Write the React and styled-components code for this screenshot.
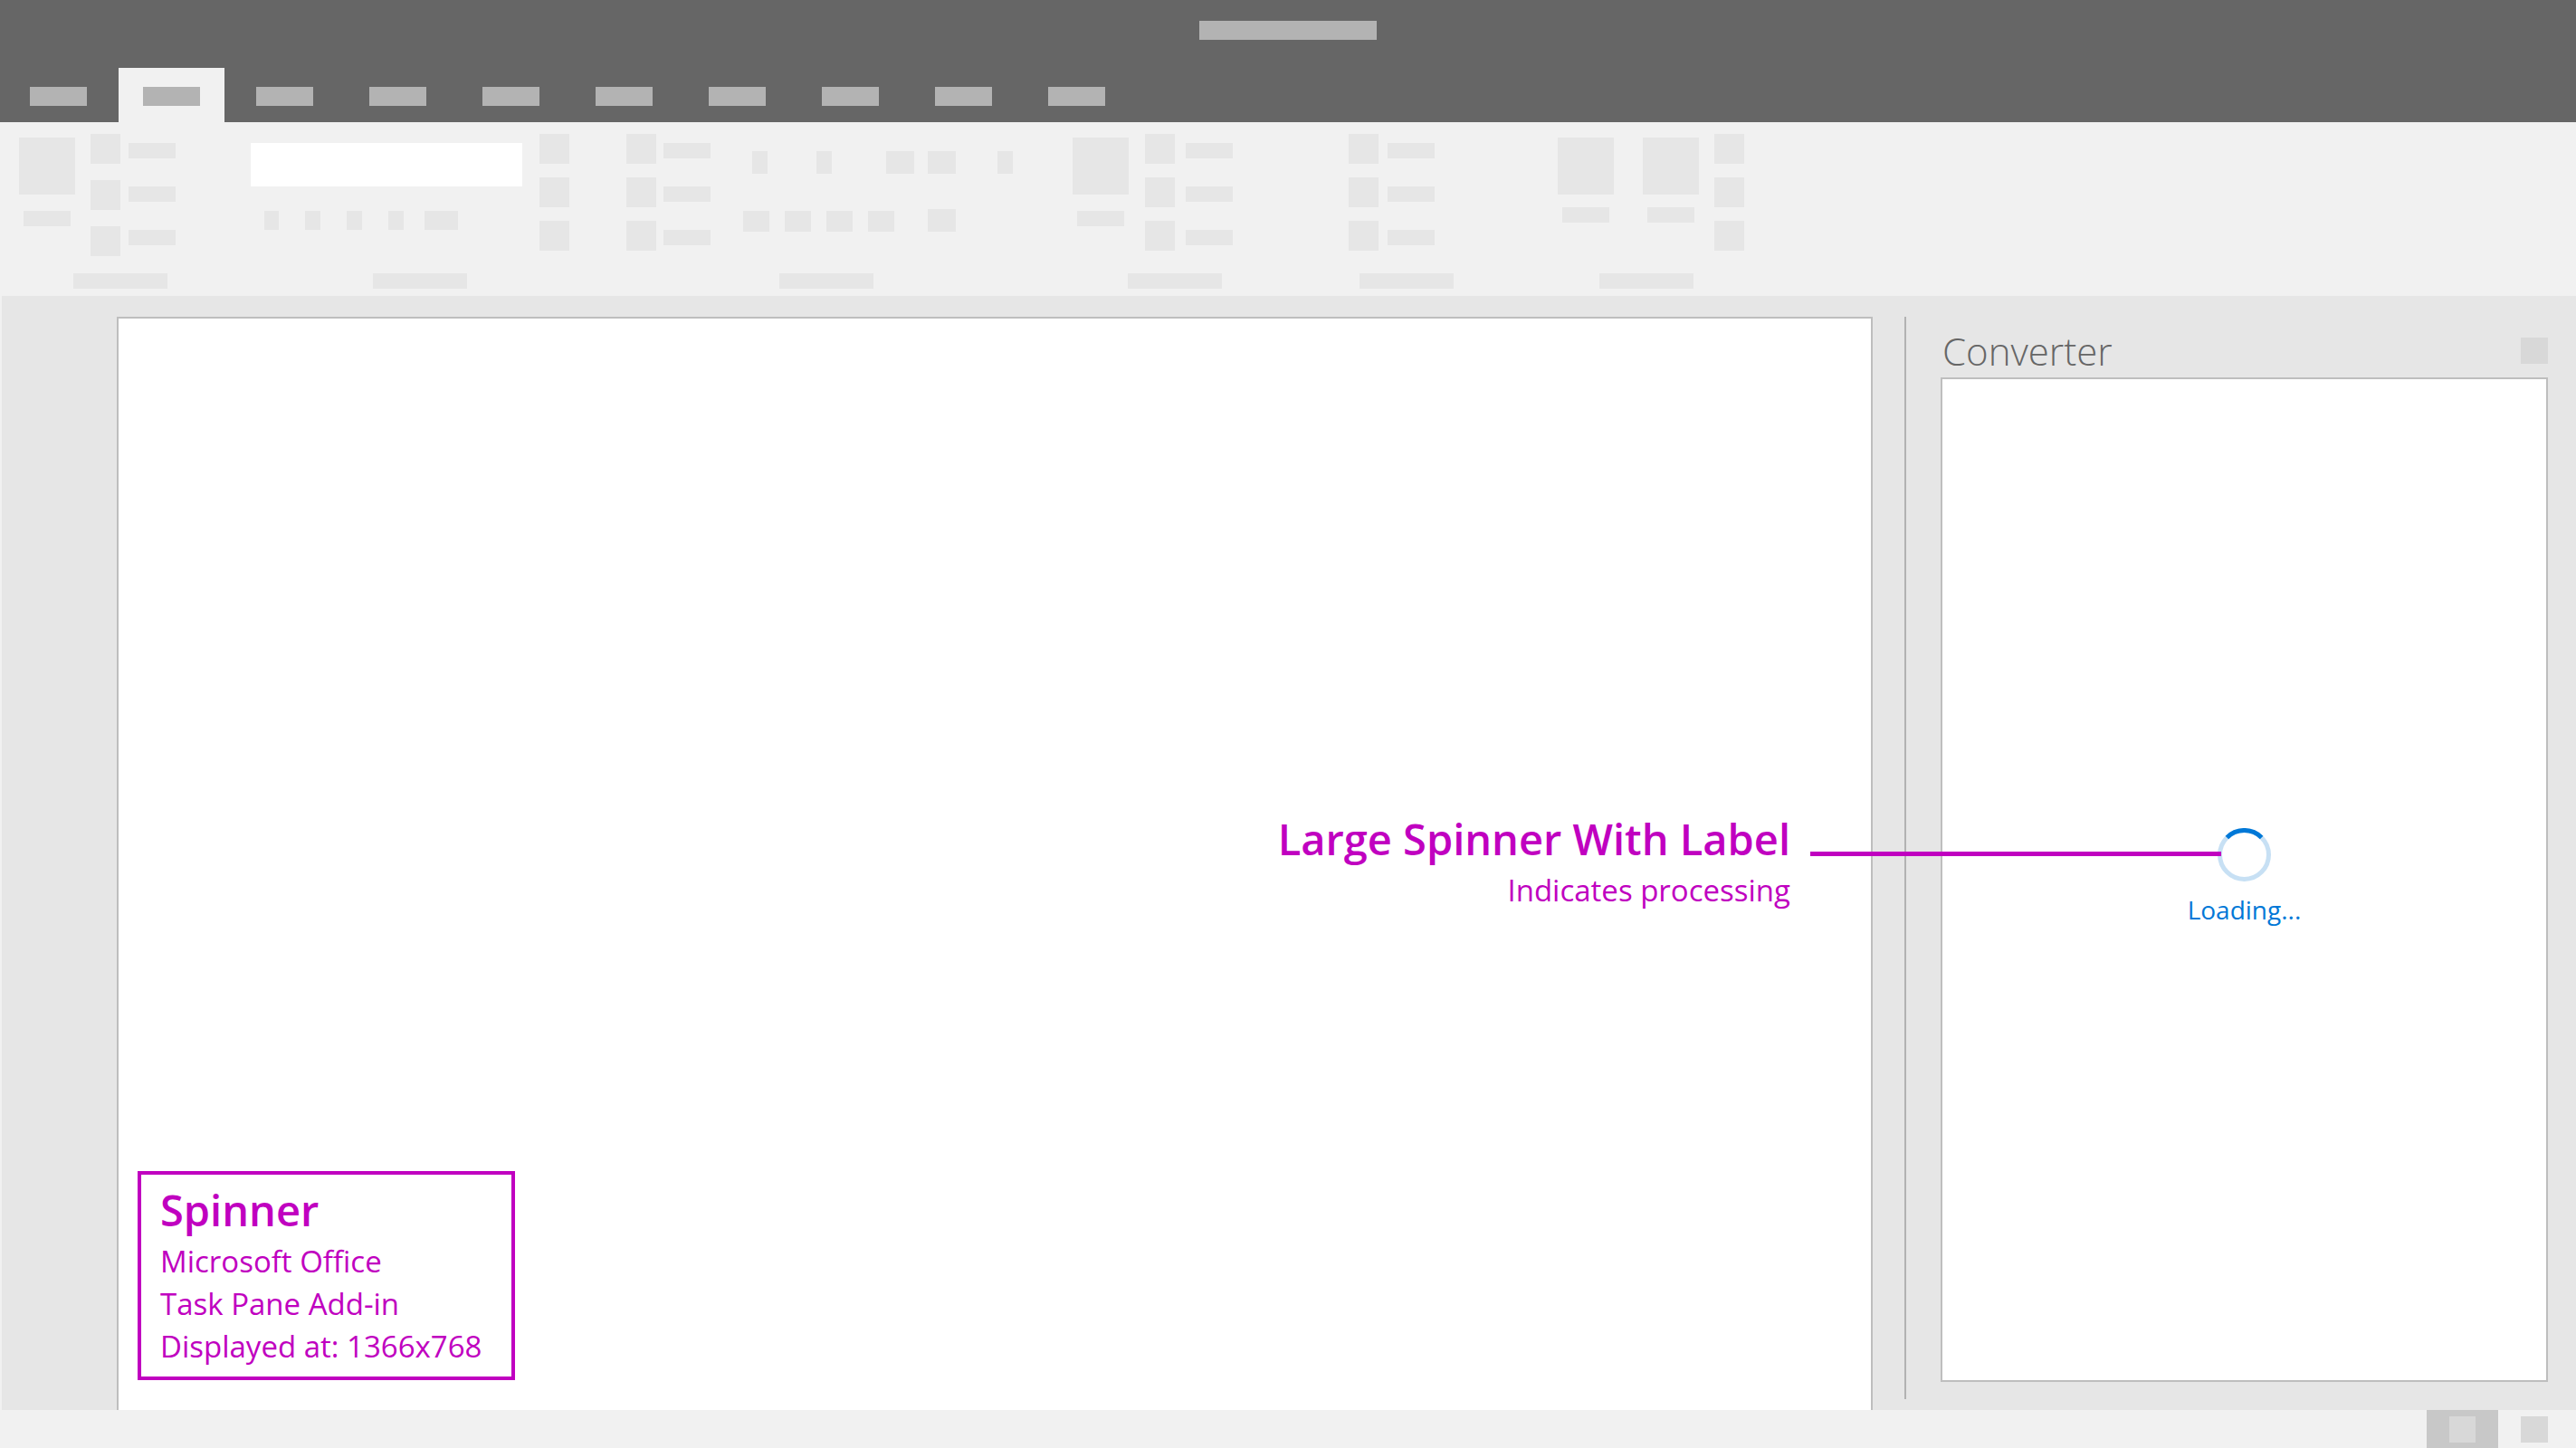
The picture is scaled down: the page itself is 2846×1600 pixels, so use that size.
import React from "react";
import styled, { createGlobalStyle } from "styled-components";

const color = {
  chrome: "#666666",
  chromeBlock: "#b3b3b3",
  ribbon: "#f1f1f1",
  ribbonBlock: "#e6e6e6",
  canvas: "#e6e6e6",
  border: "#bebebe",
  divider: "#b2b2b2",
  note: "#c000c0",
  accent: "#0078d7",
  ring: "#c7e0f4",
};

const GlobalStyle = createGlobalStyle`
  *, *::before, *::after { box-sizing: border-box; }
  body {
    margin: 0;
    font-family: "Open Sans", "Noto Sans", sans-serif;
  }
  button, input { font: inherit; border: 0; padding: 0; border-radius: 0; }
  h1, h2, p { margin: 0; }
`;

const Window = styled.div`
  display: grid;
  grid-template-rows: auto auto 1fr auto;
  min-height: 100vh;
`;

/* Title bar and tabs */
const Header = styled.header`
  background: ${color.chrome};
`;

const TitleBar = styled.div`
  display: flex;
  justify-content: center;
  padding: 23px 0 31px;
`;

const DocumentTitle = styled.div`
  width: 196px;
  height: 21px;
  background: ${color.chromeBlock};
`;

const Tabs = styled.nav`
  display: flex;
  gap: 8px;
  padding-left: 6px;
`;

const Tab = styled.button`
  padding: 21px 27px 18px;
  background: ${(p) => (p.$active ? color.ribbon : "transparent")};

  &::before {
    content: "";
    display: block;
    width: 63px;
    height: 21px;
    background: ${color.chromeBlock};
  }
`;

/* Ribbon */
const Ribbon = styled.section`
  display: flex;
  padding: 13px 0 8px 21px;
  background: ${color.ribbon};
`;

const Group = styled.div`
  display: flex;
  flex-direction: column;
  align-items: center;
  gap: 19px;
  flex: none;
  width: ${(p) => p.$width}px;
  margin-left: ${(p) => p.$gap || 0}px;
`;

const GroupBody = styled.div`
  display: flex;
  align-items: flex-start;
  align-self: ${(p) => (p.$end ? "flex-end" : "flex-start")};
  gap: ${(p) => p.$gap || 0}px;
  height: 135px;
`;

const Block = styled.div`
  flex: none;
  width: ${(p) => p.$w}px;
  height: ${(p) => p.$h}px;
  margin-left: ${(p) => p.$gap || 0}px;
  background: ${color.ribbonBlock};
`;

const GroupLabel = styled(Block).attrs({ $w: 104, $h: 17 })``;
const CommandLabel = styled(Block).attrs({ $w: 52, $h: 17 })``;
const Icon = styled(Block).attrs({ $w: 33, $h: 33 })``;

const LargeCommandBox = styled.div`
  display: flex;
  flex-direction: column;
  align-items: center;
  gap: ${(p) => p.$gap}px;
  padding-top: 4px;
`;

const IconColumn = styled.div`
  display: flex;
  flex-direction: column;
  gap: ${(p) => p.$gap}px;
`;

const LabelColumn = styled.div`
  display: flex;
  flex-direction: column;
  gap: 31px;
  padding-top: 10px;
`;

const CommandListBox = styled.div`
  display: flex;
  gap: ${(p) => p.$gap}px;
`;

const FontControls = styled.div`
  display: flex;
  flex-direction: column;
  gap: 27px;
  padding-top: 10px;
`;

const FontField = styled.input`
  display: block;
  width: 300px;
  height: 48px;
  background: #ffffff;
`;

const ParagraphControls = styled.div`
  display: flex;
  flex-direction: column;
  gap: 39px;
  padding-top: 19px;
`;

const BlockRow = styled.div`
  display: flex;
  align-items: flex-end;
  padding-left: ${(p) => p.$indent || 0}px;
`;

/* Work area */
const Workspace = styled.main`
  display: flex;
  padding: 23px 31px 0 127px;
  border-left: 2px solid ${color.ribbon};
  background: ${color.canvas};
`;

const Page = styled.article`
  display: flex;
  flex: 1;
  align-items: flex-end;
  padding: 0 21px 33px;
  border: 2px solid ${color.border};
  border-bottom: 0;
  background: #ffffff;
`;

const NoteTitle = styled.h2`
  color: ${color.note};
  font-size: 47px;
  font-weight: 600;
  line-height: 66px;
`;

const NoteText = styled.p`
  color: ${color.note};
  font-size: 33px;
  line-height: 47px;
`;

const Legend = styled.section`
  min-width: 417px;
  padding: 6px 20px 10px 21px;
  border: 4px solid ${color.note};
`;

const Divider = styled.div`
  width: 2px;
  margin: 0 38px 12px 35px;
  background: ${color.divider};
`;

const TaskPane = styled.aside`
  display: flex;
  flex-direction: column;
  flex: none;
  width: 671px;
  margin-bottom: 31px;
`;

const PaneHeader = styled.div`
  display: flex;
  align-items: center;
  justify-content: space-between;
  padding: 9px 0 1px 2px;
`;

const PaneTitle = styled.h1`
  color: ${color.chrome};
  font-size: 42px;
  font-weight: 300;
  line-height: 57px;
`;

const SquareButton = styled.button`
  width: 30px;
  height: 29px;
  background: #d8d8d8;
`;

const PaneBody = styled.div`
  display: flex;
  flex: 1;
  flex-direction: column;
  align-items: center;
  justify-content: center;
  gap: 9px;
  padding-bottom: 2px;
  border: 2px solid ${color.border};
  background: #ffffff;
`;

const SpinnerAnchor = styled.div`
  position: relative;
  width: 59px;
  height: 59px;

  svg { display: block; }
`;

const SpinnerLabel = styled.p`
  color: ${color.accent};
  font-size: 28px;
  line-height: 44px;
`;

/* The note hangs off the spinner and lies over the page and the divider. */
const Callout = styled.div`
  position: absolute;
  top: -21px;
  right: calc(100% - 4px);
  display: flex;
  align-items: flex-start;
  gap: 22px;
  text-align: right;
  white-space: nowrap;
`;

const Leader = styled.div`
  width: 454px;
  height: 5px;
  margin-top: 47px;
  background: ${color.note};
`;

/* Status bar */
const StatusBar = styled.footer`
  display: flex;
  align-items: center;
  justify-content: flex-end;
  gap: 25px;
  height: 42px;
  padding-right: 31px;
  background: ${color.ribbon};
`;

const ActiveView = styled.button`
  display: flex;
  align-items: center;
  justify-content: center;
  align-self: stretch;
  width: 79px;
  background: #c8c8c8;

  &::before {
    content: "";
    width: 29px;
    height: 29px;
    background: #d8d8d8;
  }
`;

const tabs = ["File", "Home", "Insert", "Draw", "Design", "Layout", "References", "Mailings", "Review", "View"];

function LargeCommand({ gap = 18 }) {
  return (
    <LargeCommandBox $gap={gap}>
      <Block $w={62} $h={63} />
      <CommandLabel />
    </LargeCommandBox>
  );
}

function Icons({ gap = 15 }) {
  return (
    <IconColumn $gap={gap}>
      <Icon />
      <Icon />
      <Icon />
    </IconColumn>
  );
}

function CommandList({ gap, iconGap }) {
  return (
    <CommandListBox $gap={gap}>
      <Icons gap={iconGap} />
      <LabelColumn>
        <CommandLabel />
        <CommandLabel />
        <CommandLabel />
      </LabelColumn>
    </CommandListBox>
  );
}

function Spinner() {
  return (
    <svg width="59" height="59" viewBox="0 0 59 59" fill="none" strokeWidth="5" aria-hidden="true">
      <circle cx="29.5" cy="29.5" r="27" stroke={color.ring} />
      <path d="M10.4 10.4A27 27 0 0 1 48.6 10.4" stroke={color.accent} />
    </svg>
  );
}

export default function App() {
  return (
    <>
      <GlobalStyle />
      <Window>
        <Header>
          <TitleBar>
            <DocumentTitle />
          </TitleBar>
          <Tabs>
            {tabs.map((name, i) => (
              <Tab key={name} type="button" aria-label={name} $active={i === 1} />
            ))}
          </Tabs>
        </Header>

        <Ribbon>
          <Group $width={224}>
            <GroupBody $gap={17}>
              <LargeCommand />
              <CommandList gap={9} iconGap={18} />
            </GroupBody>
            <GroupLabel />
          </Group>

          <Group $width={374} $gap={32}>
            <GroupBody $gap={19}>
              <FontControls>
                <FontField type="text" aria-label="Font" />
                <BlockRow $indent={15}>
                  <Block $w={16} $h={21} />
                  <Block $w={17} $h={21} $gap={29} />
                  <Block $w={17} $h={21} $gap={29} />
                  <Block $w={17} $h={21} $gap={29} />
                  <Block $w={37} $h={21} $gap={23} />
                </BlockRow>
              </FontControls>
              <Icons />
            </GroupBody>
            <GroupLabel />
          </Group>

          <Group $width={441} $gap={41}>
            <GroupBody $gap={36}>
              <CommandList gap={8} />
              <ParagraphControls>
                <BlockRow $indent={10}>
                  <Block $w={17} $h={25} />
                  <Block $w={17} $h={25} $gap={54} />
                  <Block $w={31} $h={25} $gap={60} />
                  <Block $w={31} $h={25} $gap={15} />
                  <Block $w={17} $h={25} $gap={46} />
                </BlockRow>
                <BlockRow>
                  <Block $w={29} $h={23} />
                  <Block $w={29} $h={23} $gap={17} />
                  <Block $w={29} $h={23} $gap={17} />
                  <Block $w={29} $h={23} $gap={17} />
                  <Block $w={31} $h={25} $gap={37} />
                </BlockRow>
              </ParagraphControls>
            </GroupBody>
            <GroupLabel />
          </Group>

          <Group $width={226} $gap={52}>
            <GroupBody $gap={18}>
              <LargeCommand />
              <CommandList gap={12} />
            </GroupBody>
            <GroupLabel />
          </Group>

          <Group $width={128} $gap={79}>
            <GroupBody>
              <CommandList gap={10} />
            </GroupBody>
            <GroupLabel />
          </Group>

          <Group $width={216} $gap={93}>
            <GroupBody $end $gap={17}>
              <CommandListBox $gap={32}>
                <LargeCommand gap={14} />
                <LargeCommand gap={14} />
              </CommandListBox>
              <Icons />
            </GroupBody>
            <GroupLabel />
          </Group>
        </Ribbon>

        <Workspace>
          <Page>
            <Legend>
              <NoteTitle>Spinner</NoteTitle>
              <NoteText>Microsoft Office</NoteText>
              <NoteText>Task Pane Add-in</NoteText>
              <NoteText>Displayed at: 1366x768</NoteText>
            </Legend>
          </Page>
          <Divider />
          <TaskPane>
            <PaneHeader>
              <PaneTitle>Converter</PaneTitle>
              <SquareButton type="button" aria-label="Close" />
            </PaneHeader>
            <PaneBody>
              <SpinnerAnchor>
                <Spinner />
                <Callout>
                  <div>
                    <NoteTitle>Large Spinner With Label</NoteTitle>
                    <NoteText>Indicates processing</NoteText>
                  </div>
                  <Leader />
                </Callout>
              </SpinnerAnchor>
              <SpinnerLabel role="status">Loading...</SpinnerLabel>
            </PaneBody>
          </TaskPane>
        </Workspace>

        <StatusBar>
          <ActiveView type="button" aria-label="Print layout" />
          <SquareButton type="button" aria-label="Web layout" />
        </StatusBar>
      </Window>
    </>
  );
}
